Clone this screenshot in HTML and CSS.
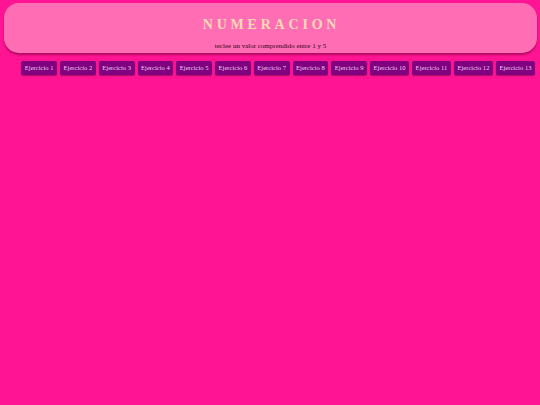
FILE: index.html
```html
<!DOCTYPE html>
<html>
<head>
<meta charset="utf-8">
<link rel="stylesheet" href="styles.css">
</head>
<body>
<header class="cabecera">
  <h1 class="titulo">NUMERACION</h1>
  <p class="subtitulo">teclee un valor comprendido entre 1 y 5</p>
</header>
<nav class="menu">
  <a class="boton">Ejercicio 1</a>
  <a class="boton">Ejercicio 2</a>
  <a class="boton">Ejercicio 3</a>
  <a class="boton">Ejercicio 4</a>
  <a class="boton">Ejercicio 5</a>
  <a class="boton">Ejercicio 6</a>
  <a class="boton">Ejercicio 7</a>
  <a class="boton">Ejercicio 8</a>
  <a class="boton">Ejercicio 9</a>
  <a class="boton">Ejercicio 10</a>
  <a class="boton">Ejercicio 11</a>
  <a class="boton">Ejercicio 12</a>
  <a class="boton">Ejercicio 13</a>
</nav>
</body>
</html>
```
FILE: styles.css
```css
html, body {
  margin: 0;
  padding: 0;
}
body {
  background: #ff1493;
  font-family: "Liberation Serif", "Times New Roman", serif;
  padding: 3px 3px 0 4px;
  height: 405px;
  box-sizing: border-box;
}
.cabecera {
  background: #ff6eb4;
  border-radius: 15px;
  height: 50px;
  box-sizing: border-box;
  padding-top: 14px;
  text-align: center;
  box-shadow: 0 2px 2px rgba(120, 0, 60, 0.55);
}
.titulo {
  margin: 0;
  font-size: 14px;
  line-height: 16px;
  font-weight: bold;
  letter-spacing: 3.8px;
  color: #ffd9b4;
  padding-left: 2px;
}
.subtitulo {
  margin: 9px 0 0 0;
  font-size: 7px;
  line-height: 9px;
  color: #300018;
}
.menu {
  display: flex;
  justify-content: flex-end;
  gap: 3px;
  margin-top: 8px;
  padding-right: 2px;
}
.boton {
  background: #800080;
  color: #ead2f2;
  font-size: 6.6px;
  line-height: 14px;
  height: 14px;
  padding: 0 3.5px;
  border-radius: 2px;
  white-space: nowrap;
  box-shadow: 0 1px 1px rgba(90, 0, 60, 0.5);
}
```
